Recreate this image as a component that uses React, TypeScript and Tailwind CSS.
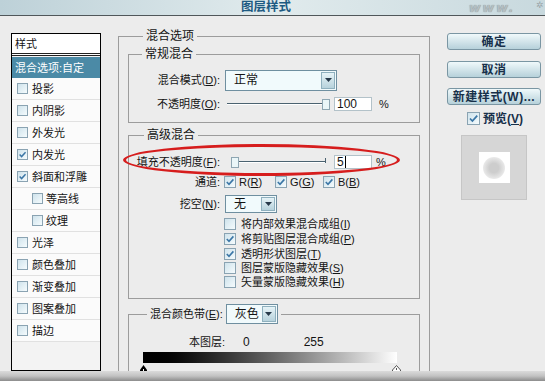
import React from "react";

const FONT = "font-['Liberation_Sans','Noto_Sans_CJK_SC',sans-serif]";

function Check({ on, size = 12 }: { on?: boolean; size?: number }) {
  return (
    <span
      className="inline-flex shrink-0 items-center justify-center border border-[#8aa3b2] bg-gradient-to-br from-[#cfe3ec] to-[#f5fbfd]"
      style={{ width: size, height: size }}
    >
      {on && (
        <svg width={size - 2} height={size - 2} viewBox="0 0 10 10">
          <path d="M1.8 5 L4 7.3 L8.4 2.4" fill="none" stroke="#3b76a6" strokeWidth="1.6" />
        </svg>
      )}
    </span>
  );
}

function Dropdown({ text, w, h }: { text: string; w: number; h: number }) {
  return (
    <div
      className="flex shrink-0 border border-[#6f8fa0] bg-[#f1fafc]"
      style={{ width: w, height: h }}
    >
      <span className="flex flex-1 items-center pl-[8px] text-[12px]">{text}</span>
      <span className="m-[1px] flex w-[14px] items-center justify-center border border-[#8fb0be] bg-gradient-to-b from-[#e6f3f7] to-[#b7d2dc]">
        <svg width="7" height="4" viewBox="0 0 7 4">
          <polygon points="0,0 7,0 3.5,4" fill="#27394a" />
        </svg>
      </span>
    </div>
  );
}

function Slider({ lineL, lineR, thumbX, tick }: { lineL: number; lineR: number; thumbX: number; tick?: boolean }) {
  return (
    <div className="relative h-[14px] w-[106px] shrink-0">
      <div
        className="absolute top-[6px] h-[2px] border-t border-[#4b6270] border-b border-b-white"
        style={{ left: lineL, right: lineR }}
      />
      {tick && <div className="absolute top-[3px] h-[5px] w-px bg-[#4b6270]" style={{ right: lineR }} />}
      <div
        className="absolute top-[2px] h-[11px] w-[8px] border border-[#8ea6b2] bg-[#eaf6f8]"
        style={{ left: thumbX }}
      />
    </div>
  );
}

function NumBox({ value, caret }: { value: string; caret?: boolean }) {
  return (
    <div className="ml-[2px] flex h-[14px] w-[38px] shrink-0 items-center border border-[#b3c2c9] bg-white pl-[2px] text-[12px]">
      {value}
      {caret && <span className="ml-[1px] h-[12px] w-px bg-black" />}
    </div>
  );
}

const LIST = [
  { t: "投影" },
  { t: "内阴影" },
  { t: "外发光" },
  { t: "内发光", on: true },
  { t: "斜面和浮雕", on: true },
  { t: "等高线", sub: true },
  { t: "纹理", sub: true },
  { t: "光泽" },
  { t: "颜色叠加" },
  { t: "渐变叠加" },
  { t: "图案叠加" },
  { t: "描边" },
];

const KNOCK = [
  { t: "将内部效果混合成组", k: "I", mt: "mt-0" },
  { t: "将剪贴图层混合成组", k: "P", on: true, mt: "mt-[1px]" },
  { t: "透明形状图层", k: "T", on: true, mt: "mt-[1px]" },
  { t: "图层蒙版隐藏效果", k: "S", mt: "mt-0" },
  { t: "矢量蒙版隐藏效果", k: "H", mt: "mt-0" },
];

export default function App() {
  return (
    <div className={`${FONT} flex h-[381px] w-[545px] flex-col overflow-hidden bg-[#ececec] text-[11px] leading-[14px] text-[#141414]`}>
      {/* title bar */}
      <div className="relative flex h-[16px] shrink-0 items-center border-b border-[#50575a] bg-gradient-to-r from-[#bdd1d8] via-[#e1ebed] to-[#c8d9de]">
        <span className="ml-[241px] text-[12.5px] font-bold leading-none text-[#1d5a82]">图层样式</span>
        <span className="absolute right-[30px] top-[1px] font-['DejaVu_Sans',sans-serif] text-[13px] font-bold italic leading-[14px] tracking-[1.5px] text-[#b4bec2] [text-shadow:0_0_1px_#7d878b]">
          www.
        </span>
        <span className="absolute right-[1px] top-[1px] text-[9px] leading-none text-[#9aa5a9]">✲</span>
      </div>

      <div className="flex min-h-0 flex-1 overflow-hidden">
        {/* style list */}
        <div className="ml-[11px] mt-[17px] flex w-[90px] shrink-0 flex-col border border-black bg-[#f3f3f3]">
          <div className="flex h-[22px] items-center border-b-[3px] border-double border-[#222] bg-white pl-[3px]">样式</div>
          <div className="mt-[1px] flex h-[21px] items-center bg-[#4b8aa6] pl-[3px] text-white">混合选项:自定</div>
          {LIST.map((r) => (
            <div
              key={r.t}
              className={`flex h-[22px] items-center border-b border-[#e1e1e1] bg-[#fbfbfb] ${r.sub ? "gap-[3px] pl-[20px]" : "gap-[4px] pl-[5px]"}`}
            >
              <Check on={r.on} size={11} />
              <span>{r.t}</span>
            </div>
          ))}
        </div>

        {/* blending options */}
        <div className="ml-[17px] mt-[13px] w-[312px] shrink-0">
          <fieldset className="border border-[#9c9c9c] px-[9px] pb-[40px] pt-[4px]">
            <legend className="ml-[15px] px-[3px] text-[12px] leading-[14px]">混合选项</legend>

            <fieldset className="border border-[#9c9c9c] pb-[11px]">
              <legend className="ml-[13px] px-[3px] text-[12px] leading-[14px]">常规混合</legend>
              <div className="mt-[9px] flex h-[20px] items-center">
                <span className="w-[91px] text-right">
                  混合模式(<u>D</u>):
                </span>
                <div className="ml-[5px]">
                  <Dropdown text="正常" w={112} h={21} />
                </div>
              </div>
              <div className="mt-[7px] flex h-[14px] items-center">
                <span className="w-[91px] text-right">
                  不透明度(<u>O</u>):
                </span>
                <div className="ml-[6px] flex items-center">
                  <Slider lineL={1} lineR={10} thumbX={96} />
                  <NumBox value="100" />
                  <span className="ml-[7px]">%</span>
                </div>
              </div>
            </fieldset>

            <fieldset className="mt-[5px] border border-[#9c9c9c] pb-[9px]">
              <legend className="ml-[15px] px-[3px] text-[12px] leading-[14px]">高级混合</legend>
              <div className="relative mt-[13px] flex h-[14px] items-center">
                <span className="w-[91px] text-right">
                  填充不透明度(<u>F</u>):
                </span>
                <div className="ml-[6px] flex items-center">
                  <Slider lineL={7} lineR={6} thumbX={5} tick />
                  <NumBox value="5" caret />
                  <span className="ml-[4px]">%</span>
                </div>
                <div className="pointer-events-none absolute left-[-6px] top-[-11px] h-[32px] w-[277px] rounded-[50%] border-[3px] border-[#d61d1d]" />
              </div>
              <div className="mt-[6px] flex h-[14px] items-center">
                <span className="w-[91px] text-right">通道:</span>
                <div className="ml-[4px] flex items-center">
                  <div className="flex w-[51px] items-center gap-[3px]">
                    <Check on />
                    <span>
                      R(<u>R</u>)
                    </span>
                  </div>
                  <div className="flex w-[48px] items-center gap-[3px]">
                    <Check on />
                    <span>
                      G(<u>G</u>)
                    </span>
                  </div>
                  <div className="flex items-center gap-[3px]">
                    <Check on />
                    <span>
                      B(<u>B</u>)
                    </span>
                  </div>
                </div>
              </div>
              <div className="mt-[6px] flex h-[18px] items-center">
                <span className="w-[91px] text-right">
                  挖空(<u>N</u>):
                </span>
                <div className="ml-[5px]">
                  <Dropdown text="无" w={52} h={18} />
                </div>
              </div>
              <div className="mt-[4px] flex flex-col pl-[95px]">
                {KNOCK.map((k) => (
                  <div key={k.t} className={`flex h-[14px] items-center gap-[5px] ${k.mt}`}>
                    <Check on={k.on} />
                    <span>
                      {k.t}(<u>{k.k}</u>)
                    </span>
                  </div>
                ))}
              </div>
            </fieldset>

            <fieldset className="mt-[5px] border border-[#9c9c9c] pb-[30px]">
              <legend className="ml-[18px] px-[3px]">
                <span className="inline-flex items-center gap-[3px]">
                  <span>
                    混合颜色带(<u>E</u>):
                  </span>
                  <Dropdown text="灰色" w={52} h={20} />
                </span>
              </legend>
              <div className="mt-[11px] flex h-[14px] items-center">
                <span className="w-[96px] text-right">本图层:</span>
                <span className="ml-[18px] text-[12px]">0</span>
                <span className="ml-[54px] text-[12px]">255</span>
              </div>
              <div className="ml-[14px] mt-[3px] h-[11px] w-[254px] bg-gradient-to-r from-black to-white" />
              <div className="ml-[11px] mt-[2px] flex h-[8px] w-[261px] justify-between">
                <svg width="7" height="8" viewBox="0 0 7 8">
                  <polygon points="3.5,0 7,5 7,8 0,8 0,5" fill="#000" />
                  <rect x="3" y="4" width="1" height="2" fill="#fff" />
                </svg>
                <svg width="9" height="8" viewBox="0 0 9 8">
                  <polygon points="4.5,0.5 8.5,5 8.5,7.5 0.5,7.5 0.5,5" fill="#fff" stroke="#555" />
                  <rect x="4" y="3" width="1" height="2" fill="#555" />
                </svg>
              </div>
            </fieldset>
          </fieldset>
        </div>

        {/* buttons */}
        <div className="ml-[17px] mt-[17px] flex w-[94px] shrink-0 flex-col">
          {["确定", "取消", "新建样式(W)..."].map((b, i) => (
            <button
              key={b}
              className={`flex h-[17px] items-center justify-center rounded-[3px] border border-[#7a96a3] bg-gradient-to-b from-[#f0f9fb] to-[#b6d1da] text-[12px] font-bold leading-none tracking-[0.5px] text-[#17304a] ${i === 0 ? "" : i === 1 ? "mt-[11px]" : "mt-[10px]"}`}
            >
              {b}
            </button>
          ))}
          <div className="ml-[20px] mt-[7px] flex h-[13px] items-center gap-[3px]">
            <Check on size={13} />
            <span className="text-[12px] font-bold text-[#17304a]">
              预览(<u>V</u>)
            </span>
          </div>
          <div className="ml-[14px] mt-[10px] flex h-[65px] w-[66px] items-center justify-center border border-[#c6c6c6] bg-[#d6d6d6]">
            <div className="flex h-[31px] w-[31px] items-center justify-center bg-white">
              <div className="h-[22px] w-[22px] rounded-full bg-[radial-gradient(circle,#cdcdcd_30%,#ffffff_100%)]" />
            </div>
          </div>
        </div>
      </div>

      <div className="h-[10px] shrink-0 bg-gradient-to-b from-[#dbdbdb] via-[#c2c2c2] to-[#8c8c8c]" />
    </div>
  );
}
